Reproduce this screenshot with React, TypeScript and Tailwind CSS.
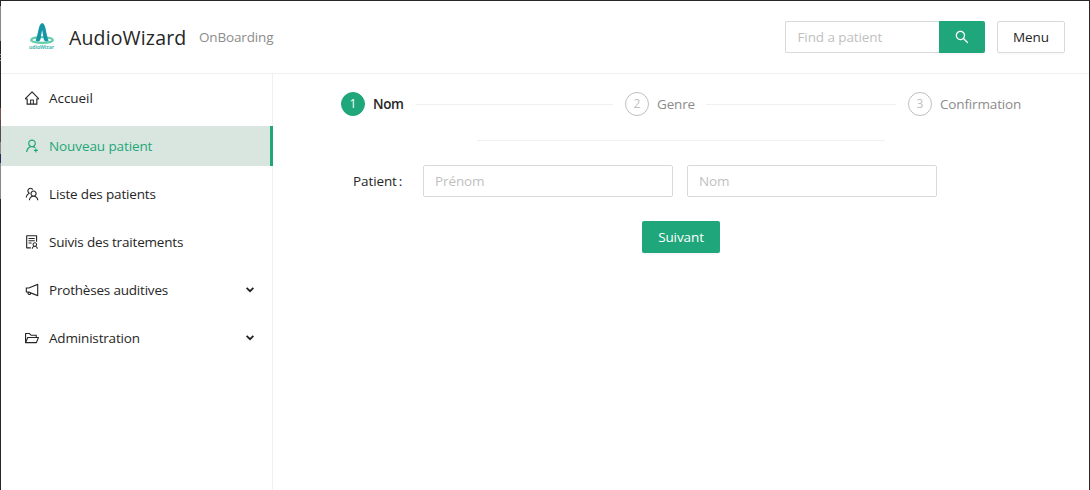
import React from "react";
import {
  AiOutlineHome,
  AiOutlineUserAdd,
  AiOutlineTeam,
  AiOutlineSolution,
  AiOutlineNotification,
  AiOutlineFolderOpen,
  AiOutlineSearch,
} from "react-icons/ai";
import type { IconType } from "react-icons";

type Item = { label: string; icon: IconType; text: string; active?: boolean; sub?: boolean };

const items: Item[] = [
  { label: "Accueil", icon: AiOutlineHome, text: "tracking-[-0.05px]" },
  { label: "Nouveau patient", icon: AiOutlineUserAdd, text: "tracking-[-0.1px]", active: true },
  { label: "Liste des patients", icon: AiOutlineTeam, text: "tracking-[-0.16px]" },
  { label: "Suivis des traitements", icon: AiOutlineSolution, text: "tracking-[-0.18px]" },
  { label: "Prothèses auditives", icon: AiOutlineNotification, text: "tracking-[-0.2px]", sub: true },
  { label: "Administration", icon: AiOutlineFolderOpen, text: "tracking-[-0.17px]", sub: true },
];

function Logo() {
  return (
    <svg className="overflow-visible" width="28" height="30" viewBox="0 0 28 30">
      <ellipse cx="14" cy="18" rx="10.8" ry="2.9" fill="none" stroke="#62ccab" strokeWidth="2.2" />
      <path d="M7.6 18.4C10.2 14 10.2 1.6 14.2 1.1C18.2 1.6 18 14 20.6 18.4C18.6 20.2 16.6 19.7 15.8 17.5L14.1 8L12.4 17.5C11.6 19.7 9.8 20.2 7.6 18.4Z" fill="#1596a6" />
      <text x="1" y="27" fontSize="5.6" fontWeight="700" textLength="25" lengthAdjust="spacingAndGlyphs" fill="#4bb9b4">udioWizar</text>
    </svg>
  );
}

function Chevron() {
  return (
    <svg width="8" height="6" viewBox="0 0 8 6" fill="none" stroke="#202020" strokeWidth="1.8">
      <path d="M0.6 0.9L4 4.2L7.4 0.9" />
    </svg>
  );
}

function Step({ n, title, active }: { n: number; title: string; active?: boolean }) {
  return (
    <>
      <span
        className={`flex size-6 shrink-0 items-center justify-center rounded-full border text-[12px] ${
          active ? "border-[#1fa67a] bg-[#1fa67a] text-white" : "border-[#bfbfbf] text-[#bfbfbf]"
        }`}
      >
        {n}
      </span>
      <span
        className={`ml-2 shrink-0 whitespace-nowrap ${
          active ? "font-semibold tracking-[-0.35px] text-[#262626]" : "tracking-[-0.15px] text-[#8c8c8c]"
        }`}
      >
        {title}
      </span>
    </>
  );
}

export default function App() {
  return (
    <div className="flex h-[490px] w-[1090px] overflow-hidden bg-white font-['Open_Sans','Noto_Sans',sans-serif] text-[13.5px] leading-[22px] tracking-[-0.1px] text-[#262626]">
      <div className="flex w-px shrink-0 flex-col bg-[#29262a]">
        <div className="mt-1.5 h-[35px] bg-[#888888]" />
        <div className="mt-[13px] h-px bg-[#a0a0a0]" />
        <div className="mt-0.5 h-px bg-[#a06070]" />
        <div className="mt-0.5 h-px bg-[#a0a0a0]" />
        <div className="mt-[47px] h-3 bg-[#75564b]" />
        <div className="h-[22px] bg-[#574b4b]" />
        <div className="h-3 bg-[#8d898b]" />
        <div className="h-[9px] bg-[#2d2856]" />
        <div className="h-9 bg-[#888888]" />
      </div>
      <div className="flex flex-1 flex-col border-t border-r border-[#29262a]">
        <header className="flex h-[73px] shrink-0 items-center border-b border-[#f0f0f0] pr-6 pl-[27px]">
          <Logo />
          <h1 className="ml-[13px] w-[130px] pt-0.5 text-[19.5px] font-medium tracking-[0.15px]">AudioWizard</h1>
          <span className="tracking-[-0.15px] text-[#8c8c8c]">OnBoarding</span>
          <div className="ml-auto flex">
            <input className="h-8 w-[154px] rounded-l-xs border border-r-0 border-[#d9d9d9] px-[11.5px] tracking-[-0.1px] placeholder:text-[#bfbfbf]" placeholder="Find a patient" />
            <button className="flex h-8 w-[46px] items-center justify-center rounded-r-xs bg-[#1fa67a] text-white shadow-[0_2px_0_rgba(0,0,0,0.03)]">
              <AiOutlineSearch size={16} />
            </button>
            <button className="ml-3 h-8 w-[68px] rounded-xs border border-[#d9d9d9] shadow-[0_2px_0_rgba(0,0,0,0.015)]">Menu</button>
          </div>
        </header>
        <div className="flex flex-1">
          <nav className="flex w-[272px] shrink-0 flex-col gap-2 border-r border-[#f0f0f0] pt-1">
            {items.map(({ label, icon: Icon, text, active, sub }) => (
              <a
                key={label}
                className={`-mr-px flex h-10 shrink-0 items-center border-r-3 pl-[23px] pr-4 ${
                  active ? "border-[#1fa67a] bg-[#d9e6df] text-[#1fa67a]" : "border-transparent"
                }`}
              >
                <Icon size={16} />
                <span className={`ml-[9px] flex-1 whitespace-nowrap ${text}`}>{label}</span>
                {sub && <Chevron />}
              </a>
            ))}
          </nav>
          <main className="flex flex-1 flex-col pt-[18px] pl-[68px]">
            <div className="flex w-[681px] items-center">
              <div className="flex w-[284px] items-center pr-3">
                <Step n={1} title="Nom" active />
                <span className="ml-3 h-px flex-1 bg-[#f0f0f0]" />
              </div>
              <div className="flex w-[283px] items-center pr-3">
                <Step n={2} title="Genre" />
                <span className="ml-[11px] h-px flex-1 bg-[#f0f0f0]" />
              </div>
              <Step n={3} title="Confirmation" />
            </div>
            <hr className="mt-6 ml-[136px] w-[408px] border-[#f0f0f0]" />
            <div className="mt-6 flex items-center">
              <label className="flex w-[82px] pl-3">
                Patient<span className="ml-0.5">:</span>
              </label>
              <input className="h-8 w-[250px] rounded-xs border border-[#d9d9d9] px-[11px] tracking-[-0.1px] placeholder:text-[#bfbfbf]" placeholder="Prénom" />
              <input className="ml-3.5 h-8 w-[250px] rounded-xs border border-[#d9d9d9] px-[11px] tracking-[-0.1px] placeholder:text-[#bfbfbf]" placeholder="Nom" />
            </div>
            <button className="mt-6 ml-[301px] h-8 w-[78px] rounded-xs bg-[#1fa67a] text-white shadow-[0_2px_0_rgba(0,0,0,0.03)]">Suivant</button>
          </main>
        </div>
      </div>
    </div>
  );
}
